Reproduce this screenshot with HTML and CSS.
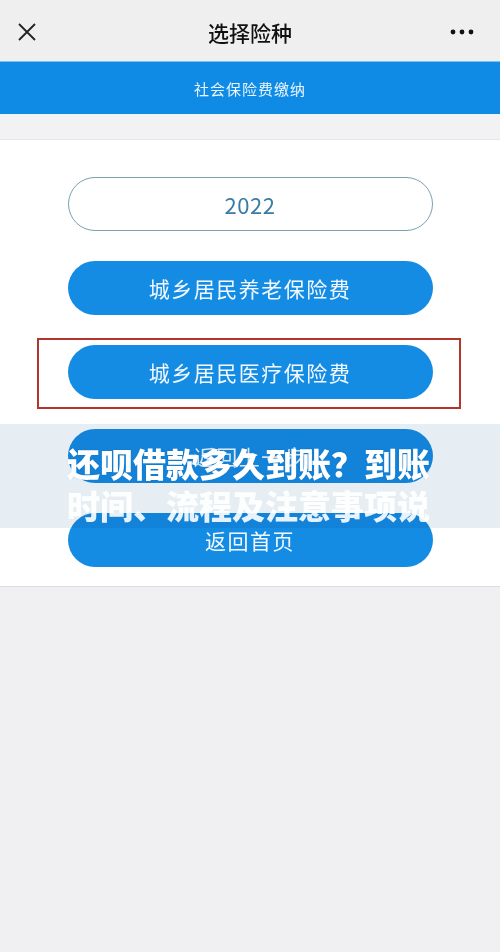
FILE: index.html
```html
<!DOCTYPE html>
<html lang="zh">
<head>
<meta charset="utf-8">
<link rel="stylesheet" href="styles.css">
</head>
<body>
<div class="page">
  <header class="nav">
    <svg class="close" width="20" height="20" viewBox="0 0 20 20"><path d="M2 2 L18 18 M18 2 L2 18" stroke="#222" stroke-width="1.8" fill="none"/></svg>
    <div class="title">选择险种</div>
    <svg class="more" width="24" height="6" viewBox="0 0 24 6"><circle cx="3" cy="3" r="2.4" fill="#111"/><circle cx="12" cy="3" r="2.4" fill="#111"/><circle cx="21" cy="3" r="2.4" fill="#111"/></svg>
  </header>
  <div class="banner">社会保险费缴纳</div>
  <div class="gap"></div>
  <main class="card">
    <div class="btn outline">2022</div>
    <div class="btn">城乡居民养老保险费</div>
    <div class="mark-wrap">
      <div class="btn">城乡居民医疗保险费</div>
      <div class="mark"></div>
    </div>
    <div class="btn">返回上一步</div>
    <div class="btn">返回首页</div>
  </main>
  <div class="band"></div>
  <div class="ov-text">
    <div class="ov-line">还呗借款多久到账？到账</div>
    <div class="ov-line faint">时间、流程及注意事项说明</div>
  </div>
</div>
</body>
</html>
```
FILE: styles.css
```css
* { box-sizing: border-box; }
html, body { margin: 0; padding: 0; }
body {
  background: #f0f0f2;
  font-family: "Noto Sans CJK SC", "Noto Sans", sans-serif;
  width: 500px;
  height: 952px;
  overflow: hidden;
}
.page { position: relative; width: 500px; height: 952px; isolation: isolate; }
.nav {
  height: 61px;
  background: #efefef;
  display: flex;
  align-items: center;
  justify-content: space-between;
  padding: 2px 26px 0 17px;
  position: relative;
}
.close { display: block; }
.title {
  position: absolute;
  left: 0; right: 0;
  text-align: center;
  font-size: 21px;
  font-weight: 500;
  color: #111;
  top: 17px;
  line-height: 30px;
  pointer-events: none;
}
.more { display: block; }
.banner {
  height: 53px;
  background: #0f8be6;
  border-top: 1px solid #7cc3f2;
  color: #eaf5ff;
  font-size: 15px;
  letter-spacing: 1px;
  display: flex;
  align-items: center;
  justify-content: center;
}
.gap { height: 25px; background: #f2f2f5; }
.card {
  background: #fff;
  border-top: 1px solid #e6e6e9;
  border-bottom: 1px solid #dedee2;
  padding: 37px 0 19px;
  display: flex;
  flex-direction: column;
  align-items: center;
  gap: 30px;
}
.btn {
  width: 365px;
  height: 54px;
  border-radius: 27px;
  background: #158ce4;
  color: #f2f8ff;
  font-size: 21px;
  letter-spacing: 1.5px;
  display: flex;
  align-items: center;
  justify-content: center;
}
.btn.outline {
  background: #fff;
  border: 1.5px solid #7d9fb2;
  color: #3a7ca6;
  font-size: 22px;
  letter-spacing: 0.5px;
}
.mark-wrap { position: relative; }
.mark {
  position: absolute;
  left: -31px; right: -28px;
  top: -7px; bottom: -10px;
  border: 2px solid #b3362e;
}
.band {
  position: absolute;
  left: 0; top: 424px;
  width: 500px; height: 104px;
  background: #e6eef3;
  mix-blend-mode: multiply;
}
.ov-text {
  position: absolute;
  left: 67px; top: 442px;
  width: 365px;
  overflow: hidden;
}
.ov-line {
  white-space: nowrap;
  font-size: 33px;
  font-weight: 900;
  line-height: 42px;
  color: #fff;
  text-shadow: 0 0 2px rgba(0,0,0,0.12);
}
.ov-line.faint {
  color: rgba(255,255,255,0.9);
  text-shadow: none;
}
```
